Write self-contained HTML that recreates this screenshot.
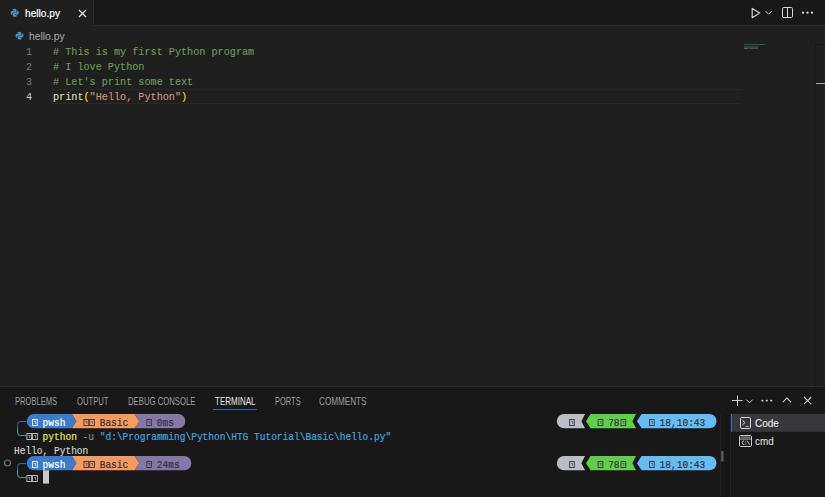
<!DOCTYPE html>
<html><head><meta charset="utf-8">
<style>
*,*::before,*::after{margin:0;padding:0;box-sizing:border-box}
html,body{width:825px;height:497px;overflow:hidden;background:#1f1f1f}
body{position:relative;font-family:"Liberation Sans",sans-serif}
.a{position:absolute;white-space:pre;transform-origin:0 0}
.mono{font-family:"Liberation Mono",monospace}
.code{font-size:11.2px;line-height:15px;transform:scaleX(0.908);-webkit-text-stroke:0.15px currentColor}
.cm{color:#6a9955}
.ptab{font-size:10.4px;color:#9d9d9d;top:396px;line-height:12px;transform:scaleX(0.8)}
.term{font-size:10px;line-height:14px;color:#cccccc;transform:scaleX(0.952);-webkit-text-stroke:0.2px currentColor}
.dk{color:#34323a}
.tf{display:inline-block;width:6px;height:8px;vertical-align:-1px;position:relative}
.tf::before{content:"";position:absolute;left:1.1px;top:0;width:5.6px;height:7.3px;border:1px solid currentColor;opacity:.9}
.tf::after{content:"";position:absolute;left:3px;top:2px;width:2px;height:3px;border-right:1px solid currentColor;border-top:1px solid currentColor;opacity:.6}
</style></head><body>
<!-- tab bar -->
<div class="a" style="left:0;top:0;width:825px;height:26px;background:#181818;border-bottom:1px solid #2b2b2b"></div>
<div class="a" style="left:0;top:0;width:94px;height:26px;background:#1f1f1f;border-right:1px solid #2b2b2b"></div>
<svg class="a" style="left:9.6px;top:7.5px" width="9.3" height="9.5" viewBox="0 0 16 16">
<path d="M7.9 1C4.3 1 4.5 2.6 4.5 2.6V4.3h3.5v.5H3.1S1 4.6 1 8.1s1.9 3.4 1.9 3.4H4V9.8s-.1-1.9 1.9-1.9h3.4s1.8 0 1.8-1.8V2.9S11.4 1 7.9 1z" fill="#4d8fbf"/>
<path d="M8.1 15c3.6 0 3.4-1.6 3.4-1.6V11.7H8v-.5h4.9S15 11.4 15 7.9s-1.9-3.4-1.9-3.4H12v1.7s.1 1.9-1.9 1.9H6.7s-1.8 0-1.8 1.8v3.2S4.6 15 8.1 15z" fill="#4d8fbf"/>
</svg>
<div id="t_tab" class="a" style="left:24.6px;top:6.4px;font-size:11.5px;line-height:14px;color:#ffffff;transform:scaleX(0.885);-webkit-text-stroke:0.2px #fff">hello.py</div>
<svg class="a" style="left:78px;top:8.5px" width="9" height="9" viewBox="0 0 9 9"><path d="M1 1L8 8M8 1L1 8" stroke="#e8e8e8" stroke-width="1.25"/></svg>
<svg class="a" style="left:0;top:0" width="825" height="26" viewBox="0 0 825 26">
<path d="M752.2 8.4L759.7 13.1L752.2 17.8Z" fill="none" stroke="#d4d4d4" stroke-width="1.2" stroke-linejoin="round"/>
<path d="M765.6 11.2L768.6 14.2L771.6 11.2" fill="none" stroke="#cccccc" stroke-width="1"/>
<rect x="782.5" y="7.5" width="10" height="10" rx="1.3" fill="none" stroke="#d4d4d4" stroke-width="1"/>
<path d="M787.5 7.5V17.5" stroke="#d4d4d4" stroke-width="1"/>
<circle cx="803" cy="12.7" r="1.15" fill="#d4d4d4"/><circle cx="807.5" cy="12.7" r="1.15" fill="#d4d4d4"/><circle cx="812" cy="12.7" r="1.15" fill="#d4d4d4"/>
</svg>

<!-- breadcrumb -->
<svg class="a" style="left:14.6px;top:30.6px" width="9" height="9.2" viewBox="0 0 16 16">
<path d="M7.9 1C4.3 1 4.5 2.6 4.5 2.6V4.3h3.5v.5H3.1S1 4.6 1 8.1s1.9 3.4 1.9 3.4H4V9.8s-.1-1.9 1.9-1.9h3.4s1.8 0 1.8-1.8V2.9S11.4 1 7.9 1z" fill="#4d8fbf"/>
<path d="M8.1 15c3.6 0 3.4-1.6 3.4-1.6V11.7H8v-.5h4.9S15 11.4 15 7.9s-1.9-3.4-1.9-3.4H12v1.7s.1 1.9-1.9 1.9H6.7s-1.8 0-1.8 1.8v3.2S4.6 15 8.1 15z" fill="#4d8fbf"/>
</svg>
<div id="t_bc" class="a" style="left:29px;top:29px;font-size:11px;line-height:14px;color:#a9a9a9;transform:scaleX(0.94)">hello.py</div>

<!-- editor -->
<div class="a" style="left:52px;top:89px;width:688px;height:15px;border:1px solid #282828;border-right:0"></div>
<div class="a mono code" style="left:26px;top:45px;color:#6e7681;-webkit-text-stroke:0">1
2
3
<span style="color:#cccccc">4</span></div>
<div id="t_code" class="a mono code" style="left:53px;top:45px"><span class="cm"># This is my first Python program</span>
<span class="cm"># I love Python</span>
<span class="cm"># Let's print some text</span>
<span style="color:#dcdcaa">print</span><span style="color:#ffd700">(</span><span style="color:#ce9178">"Hello, Python"</span><span style="color:#ffd700">)</span></div>
<!-- minimap -->
<div class="a" style="left:744px;top:44px;width:21px;height:1px;background:#3d5234"></div>
<div class="a" style="left:744px;top:45.5px;width:14px;height:1.5px;background:#34452e"></div>
<div class="a" style="left:744px;top:47px;width:14px;height:1px;background:#33432d"></div>
<div class="a" style="left:744px;top:48px;width:4px;height:1px;background:#5e5e4c"></div>
<div class="a" style="left:749px;top:48px;width:9px;height:1px;background:#5a4538"></div>
<div class="a" style="left:815px;top:44px;width:1px;height:342px;background:#161616"></div><div class="a" style="left:815px;top:44px;width:10px;height:1px;background:#171717"></div>
<div class="a" style="left:815.5px;top:82.5px;width:9.5px;height:1.7px;background:#a8a8a8"></div>

<!-- panel -->
<div class="a" style="left:0;top:386px;width:825px;height:111px;background:#181818;border-top:1px solid #2b2b2b"></div>
<div id="t_p1" class="a ptab" style="left:15px;transform:scaleX(0.730)">PROBLEMS</div>
<div id="t_p2" class="a ptab" style="left:76.5px;transform:scaleX(0.736)">OUTPUT</div>
<div id="t_p3" class="a ptab" style="left:128px;transform:scaleX(0.744)">DEBUG CONSOLE</div>
<div id="t_p4" class="a ptab" style="left:215.2px;color:#e7e7e7;transform:scaleX(0.770)">TERMINAL</div>
<div class="a" style="left:213px;top:408.5px;width:44px;height:1.2px;background:#2a6cb8"></div>
<div id="t_p5" class="a ptab" style="left:274.5px;transform:scaleX(0.720)">PORTS</div>
<div id="t_p6" class="a ptab" style="left:318.8px;transform:scaleX(0.783)">COMMENTS</div>

<!-- panel actions -->
<svg class="a" style="left:0;top:386px" width="825" height="30" viewBox="0 386 825 30">
<path d="M737.5 395.5V406M732 400.5H742.7" stroke="#cccccc" stroke-width="1"/>
<path d="M746.3 399.6L749.5 402.8L752.7 399.6" fill="none" stroke="#cccccc" stroke-width="1"/>
<rect x="761.4" y="399.8" width="2" height="1.6" fill="#cccccc"/><rect x="765.8" y="399.8" width="2" height="1.6" fill="#cccccc"/><rect x="770.2" y="399.8" width="2" height="1.6" fill="#cccccc"/>
<path d="M782.8 402.2L786.9 398.1L791 402.2" fill="none" stroke="#cccccc" stroke-width="1.1"/>
<path d="M804 397L811.2 404.2M811.2 397L804 404.2" stroke="#cccccc" stroke-width="1.1"/>
</svg>

<!-- terminal shapes -->
<svg class="a" style="left:0;top:386px" width="825" height="111" viewBox="0 386 825 111">
<!-- row1 left -->
<path d="M34 414H71.9L76.5 421.15L71.9 428.3H34A7.15 7.15 0 0 1 34 414Z" fill="#3b7ccc"/>
<path d="M71.9 414H134.7L139.3 421.15L134.7 428.3H71.9L76.5 421.15Z" fill="#f49a5c"/>
<path d="M134.7 414H178.2A7.15 7.15 0 0 1 178.2 428.3H134.7L139.3 421.15Z" fill="#8577a6"/>
<!-- bracket row1 -->
<path d="M26 421.5H20.5Q17.6 421.5 17.6 424.4V428" fill="none" stroke="#3c6fa8" stroke-width="1"/>
<path d="M17.6 428V432.6Q17.6 435.5 20.5 435.5H26" fill="none" stroke="#4aa3a3" stroke-width="1"/>
<!-- row4 left -->
<path d="M34 456H71.9L76.5 463.15L71.9 470.3H34A7.15 7.15 0 0 1 34 456Z" fill="#3b7ccc"/>
<path d="M71.9 456H134.7L139.3 463.15L134.7 470.3H71.9L76.5 463.15Z" fill="#f49a5c"/>
<path d="M134.7 456H184.2A7.15 7.15 0 0 1 184.2 470.3H134.7L139.3 463.15Z" fill="#8577a6"/>
<path d="M26 463.6H20.5Q17.6 463.6 17.6 466.5V470" fill="none" stroke="#3c6fa8" stroke-width="1"/>
<path d="M17.6 470V474.7Q17.6 477.6 20.5 477.6H26" fill="none" stroke="#4aa3a3" stroke-width="1"/>
<circle cx="7.5" cy="463" r="3" fill="none" stroke="#6e6e6e" stroke-width="1.2"/>
<!-- cursor -->
<rect x="43" y="470.3" width="6" height="13.3" fill="#c8c8c8"/>
<!-- right pills row1 -->
<path d="M564 414H585L581.4 421.15L585 428.3H564A7.15 7.15 0 0 1 564 414Z" fill="#b9bec4"/>
<path d="M590.6 414H636L632.4 421.15L636 428.3H590.6L586 421.15Z" fill="#60cf48"/>
<path d="M641.6 414H709.4A7.15 7.15 0 0 1 709.4 428.3H641.6L637 421.15Z" fill="#63bdf5"/>
<!-- right pills row4 -->
<path d="M564 456H585L581.4 463.15L585 470.3H564A7.15 7.15 0 0 1 564 456Z" fill="#b9bec4"/>
<path d="M590.6 456H636L632.4 463.15L636 470.3H590.6L586 463.15Z" fill="#60cf48"/>
<path d="M641.6 456H709.4A7.15 7.15 0 0 1 709.4 470.3H641.6L637 463.15Z" fill="#63bdf5"/>
<!-- tabs list -->
<rect x="720" y="414" width="11" height="83" fill="#161616"/><rect x="720" y="414" width="1" height="83" fill="#222"/><rect x="730" y="414" width="1" height="83" fill="#222"/>
<rect x="721" y="451" width="2.6" height="10.5" fill="#555555"/>
<rect x="731" y="413.8" width="94" height="18" fill="#37373d"/>
<rect x="731" y="413.8" width="1" height="18" fill="#2f73c0"/>
<rect x="740.5" y="417.5" width="10" height="11" rx="1.2" fill="none" stroke="#d4d4d4" stroke-width="1"/>
<path d="M742.4 420.3L745 422.6L742.4 424.9" fill="none" stroke="#d4d4d4" stroke-width="1"/>
<path d="M745.5 426.5H748.8" stroke="#b0b0b0" stroke-width="1"/>
<rect x="739.5" y="435.5" width="12" height="11" rx="1.2" fill="none" stroke="#c8c8c8" stroke-width="1"/>
<rect x="740.5" y="436.3" width="10" height="1.8" fill="#6a6a6a"/>
<rect x="740" y="438.6" width="11" height="0.9" fill="#c4c4c4"/>
<path d="M744.3 441A1.7 1.75 0 1 0 744.3 444.4" fill="none" stroke="#c4c4c4" stroke-width="1"/>
<rect x="745.3" y="441.4" width="1" height="1" fill="#c4c4c4"/><rect x="745.3" y="443.5" width="1" height="1" fill="#c4c4c4"/>
<path d="M747.2 440.6L749.4 444.6" stroke="#c4c4c4" stroke-width="0.9"/>
</svg>
<div id="t_code2" class="a" style="left:755px;top:416px;font-size:11px;line-height:14px;color:#e8e8e8;transform:scaleX(0.9);-webkit-text-stroke:0.15px #e8e8e8">Code</div>
<div id="t_cmd" class="a" style="left:755px;top:434px;font-size:11px;line-height:14px;color:#d8d8d8;transform:scaleX(0.9);-webkit-text-stroke:0.15px #d8d8d8">cmd</div>


<!-- terminal text -->
<div class="a mono term" style="left:14px;top:417px;color:#ffffff">   <i class="tf"></i> pwsh</div>
<div class="a mono term dk" style="left:14px;top:417px">            <i class="tf"></i><i class="tf"></i> Basic   <i class="tf"></i> 0ms</div>
<div class="a mono term" style="left:14px;top:431px">  <i class="tf"></i><i class="tf"></i> <span style="color:#e6e64c">python</span> <span style="color:#8a8a8a">-u</span> <span style="color:#42a5dc">"d:\Programming\Python\HTG Tutorial\Basic\hello.py"</span></div>
<div class="a mono term" style="left:14px;top:445px">Hello, Python</div>
<div class="a mono term" style="left:14px;top:459px;color:#ffffff">   <i class="tf"></i> pwsh</div>
<div class="a mono term dk" style="left:14px;top:459px">            <i class="tf"></i><i class="tf"></i> Basic   <i class="tf"></i> 24ms</div>
<div class="a mono term" style="left:14px;top:473px">  <i class="tf"></i><i class="tf"></i></div>
<div class="a mono term dk" style="left:550.7px;top:417px">   <i class="tf"></i>    <i class="tf"></i> 78<i class="tf"></i>    <i class="tf"></i> 18,10:43</div>
<div class="a mono term dk" style="left:550.7px;top:459px">   <i class="tf"></i>    <i class="tf"></i> 78<i class="tf"></i>    <i class="tf"></i> 18,10:43</div>
</body></html>
